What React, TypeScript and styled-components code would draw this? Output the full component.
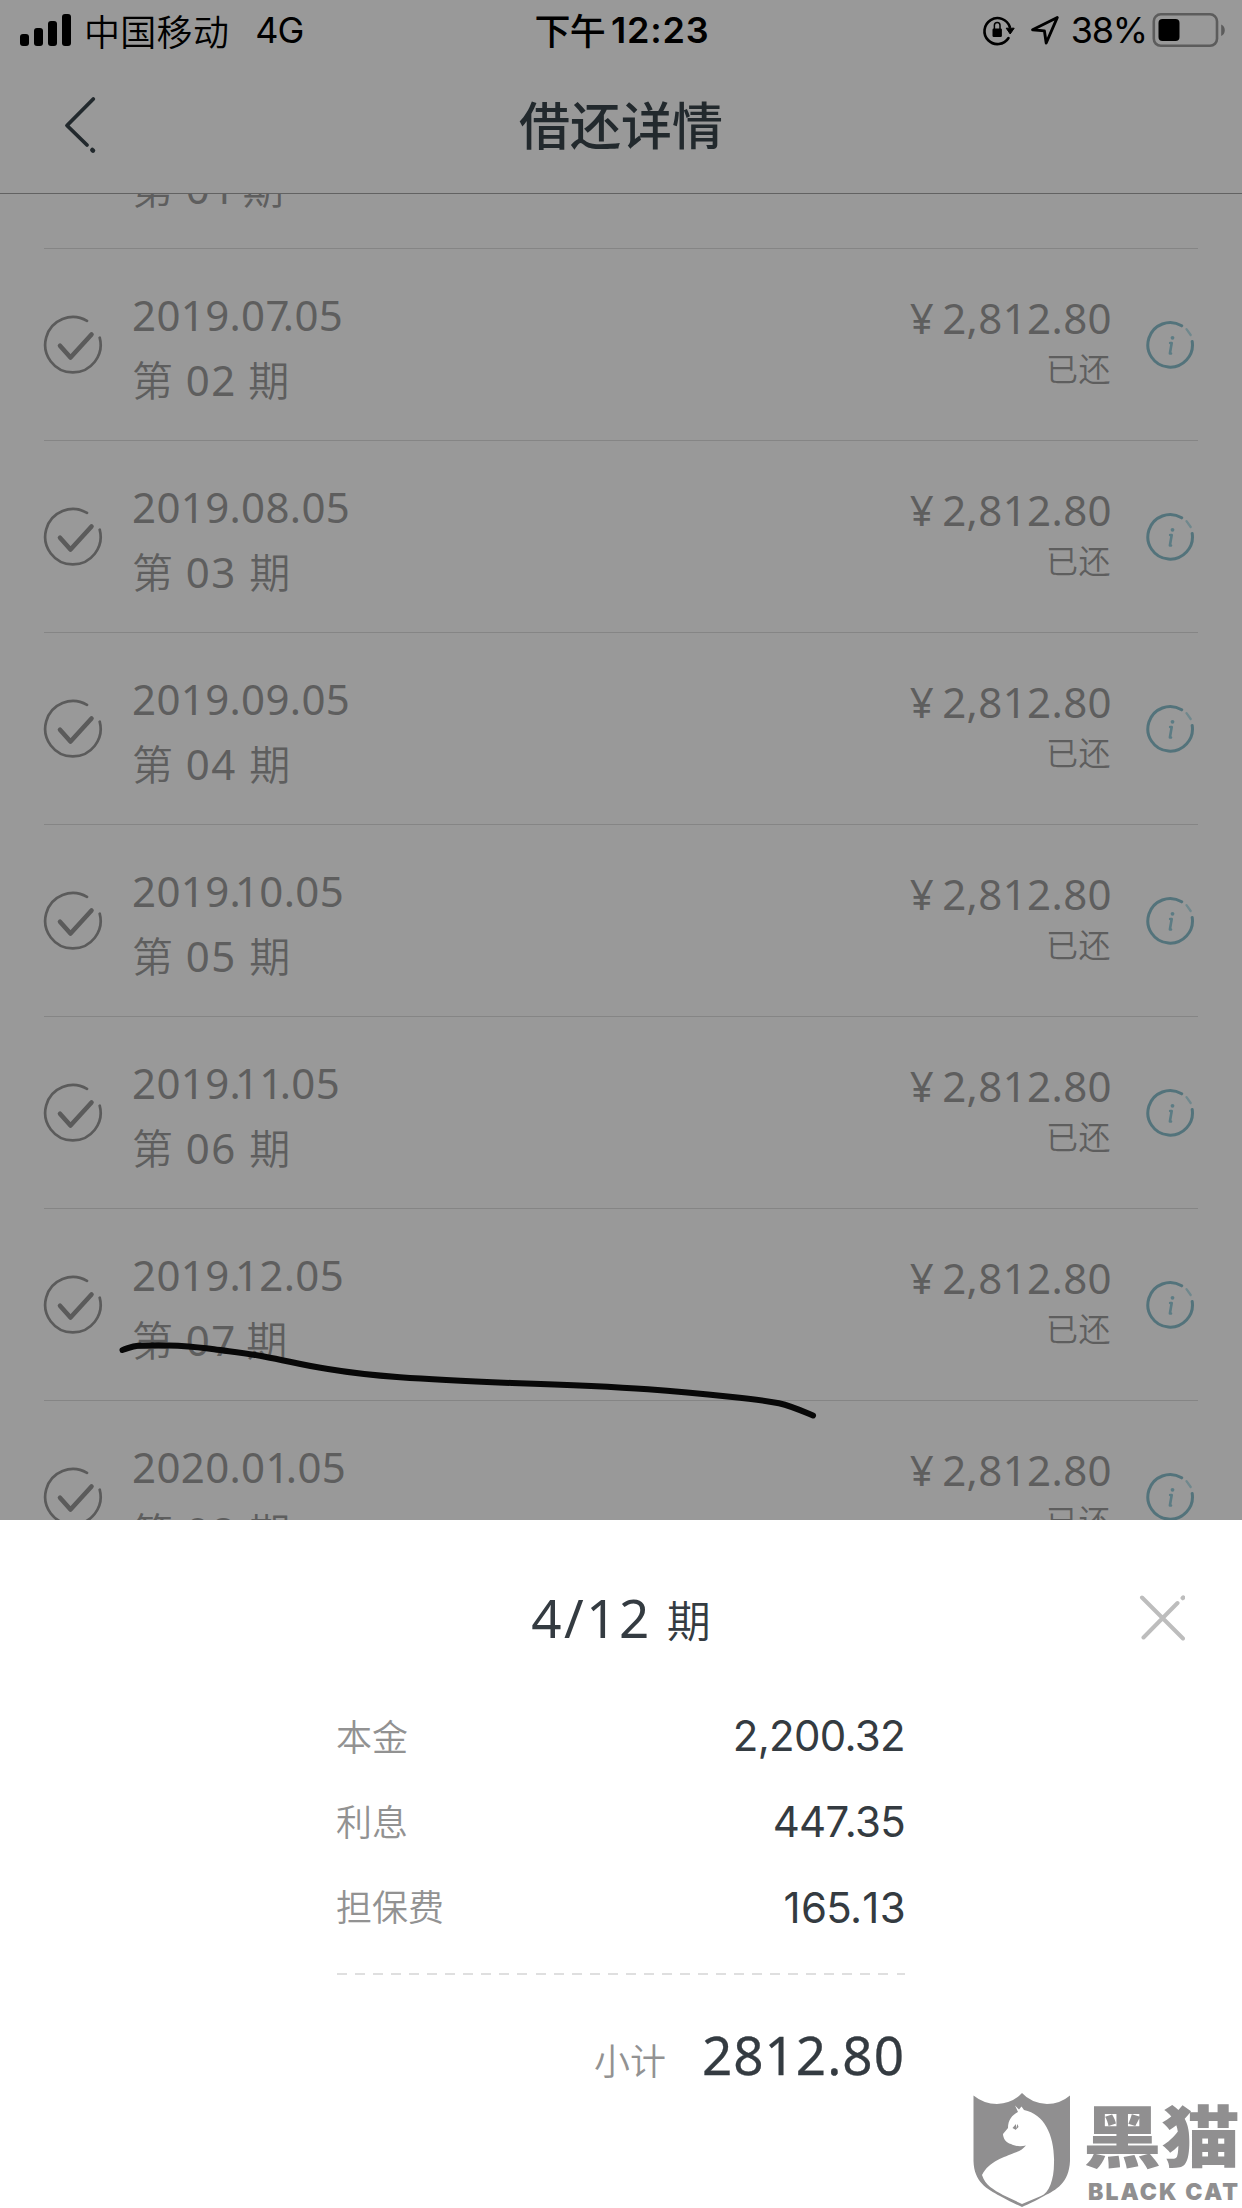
import React from "react";
import styled, { createGlobalStyle } from "styled-components";

const latin = `"Noto Sans", "Noto Sans CJK SC", sans-serif`;
const cjk = `"Noto Sans CJK SC", sans-serif`;
const system = `Inter, "Noto Sans CJK SC", sans-serif`;

const GlobalStyle = createGlobalStyle`
  body { margin: 0; background: #999; }
  * { box-sizing: border-box; }
`;

const Screen = styled.div`
  position: relative;
  width: 1242px;
  height: 2208px;
  overflow: hidden;
  display: flex;
  flex-direction: column;
  background: #999999;
`;

const StatusBar = styled.div`
  height: 60px;
  flex: none;
  display: grid;
  grid-template-columns: 1fr auto 1fr;
  align-items: center;
  padding: 0 15px 0 20px;
  color: #000;
  font: 400 36px/60px ${system};
`;

const StatusGroup = styled.div<{ $end?: boolean }>`
  display: flex;
  align-items: center;
  justify-content: ${(p) => (p.$end ? "flex-end" : "flex-start")};
  height: 60px;
`;

const Carrier = styled.span`
  margin-left: 12px;
  letter-spacing: 0.3px;
  font: 350 36px/60px ${cjk};
  height: 60px;
`;

const Network = styled.span`
  margin-left: 26px;
  letter-spacing: -0.9px;
`;

const Clock = styled.div`
  display: flex;
  font-weight: 600;
  letter-spacing: 0.8px;
  gap: 6px;
  margin-right: 3px;
`;

const ClockPrefix = styled.span`
  font: 500 36px/58px ${cjk};
  letter-spacing: -0.8px;
  height: 60px;
`;

const Percent = styled.span`
  letter-spacing: -1.2px;
  margin: 0 5px 0 11px;
`;

const NavBar = styled.div`
  height: 134px;
  flex: none;
  display: grid;
  grid-template-columns: 160px 1fr 160px;
  align-items: center;
  padding-bottom: 3px;
  border-bottom: 1px solid #626262;
`;

const BackIcon = styled.svg`
  width: 40px;
  height: 64px;
  margin-left: 60px;
`;

const NavTitle = styled.h1`
  margin: 0 0 5px;
  text-align: center;
  font: 500 51px/76px ${cjk};
  color: #22292d;
`;

const Viewport = styled.div`
  height: 1326px;
  flex: none;
  overflow: hidden;
`;

const List = styled.div`
  margin-top: -137px;
  padding: 0 44px;
`;

const Row = styled.div`
  height: 192px;
  display: flex;
  align-items: flex-start;
  border-bottom: 1px solid #858585;
  color: #5e5e5e;
`;

const CheckIcon = styled.svg`
  width: 60px;
  height: 60px;
  margin: 66px 0 0 -1px;
`;

const Period = styled.div`
  flex: 1;
  margin: 36px 0 0 29px;
  display: flex;
  flex-direction: column;
  gap: 5px;
  font: 400 42px/60px ${latin};
  letter-spacing: 0.35px;
`;

const Term = styled.span`
  display: flex;
  gap: 12.5px;
`;

const TermUnit = styled.span`
  font: 350 41px/56px ${cjk};
  height: 60px;
`;

const TermNumber = styled.span`
  letter-spacing: 1.4px;
`;

const Glyph = styled.span<{ $kern: number }>`
  margin-right: ${(p) => p.$kern}px;
`;

const Amount = styled.div`
  margin-top: 39px;
  display: flex;
  flex-direction: column;
  align-items: flex-end;
`;

const Money = styled.div`
  display: flex;
  gap: 8px;
  margin-right: -1px;
  font: 400 42px/60px ${latin};
  letter-spacing: 0.4px;
`;

const Paid = styled.div`
  font: 350 32px/38px ${cjk};
  letter-spacing: 0.5px;
  color: #5e5e5e;
`;

const InfoIcon = styled.svg`
  width: 50px;
  height: 50px;
  margin: 71px 3px 0 34px;
`;

const Ink = styled.svg`
  position: absolute;
  left: 110px;
  top: 1330px;
  width: 720px;
  height: 100px;
`;

const Sheet = styled.section`
  flex: 1;
  background: #fff;
  display: flex;
  flex-direction: column;
  color: #343b41;
`;

const SheetHeader = styled.div`
  height: 196px;
  display: grid;
  grid-template-columns: 120px 1fr 120px;
  align-items: center;
`;

const SheetTitle = styled.h2`
  grid-column: 2;
  margin: 0;
  display: flex;
  justify-content: center;
  align-items: baseline;
  gap: 15px;
  font: 400 53px/72px ${latin};
  letter-spacing: 2.4px;
`;

const TitleUnit = styled.span`
  font: 350 44px/72px ${cjk};
  letter-spacing: 0;
`;

const CloseIcon = styled.svg`
  width: 48px;
  height: 48px;
  margin-left: 15px;
`;

const Breakdown = styled.div`
  width: 568px;
  margin: -23px auto 0;
  display: flex;
  flex-direction: column;
`;

const Charges = styled.div`
  height: 258px;
  display: flex;
  justify-content: space-between;
`;

const ChargeColumn = styled.div<{ $pitch: number; $end?: boolean }>`
  display: grid;
  grid-auto-rows: ${(p) => p.$pitch}px;
  align-content: start;
  align-items: center;
  justify-items: ${(p) => (p.$end ? "end" : "start")};
`;

const Label = styled.span`
  margin: 0 0 0 -1px;
  font: 350 36px/60px ${cjk};
  color: #929292;
`;

const Value = styled.span`
  font: 400 42px/60px ${system};
  letter-spacing: -0.7px;
`;

const Dashes = styled.div`
  height: 2px;
  margin-top: 22px;
  background: repeating-linear-gradient(90deg, #dfdfdf 0 10px, transparent 10px 18.05px);
`;

const Subtotal = styled.div`
  margin-top: 44px;
  display: flex;
  justify-content: flex-end;
  align-items: baseline;
  gap: 36px;
`;

const Total = styled.span`
  font: 400 53px/72px ${latin};
  letter-spacing: 1px;
  -webkit-text-stroke: 0.3px #343b41;
`;

const Watermark = styled.div`
  position: absolute;
  left: 972px;
  top: 2092px;
  display: flex;
  gap: 17px;
  color: #908f90;
`;

const Shield = styled.svg`
  width: 99px;
  height: 116px;
`;

const Brand = styled.div`
  display: flex;
  flex-direction: column;
`;

const BrandName = styled.div`
  height: 80px;
  margin: 7px 0 0 -5px;
  font: 900 76px/76px ${cjk};
  white-space: nowrap;
  transform: scale(1.034, 0.89);
  transform-origin: 0 0;
`;

const BrandLatin = styled.div`
  font: 900 23px/26px Inter, sans-serif;
  letter-spacing: 2.1px;
  white-space: nowrap;
`;

const installments = [
  { date: "2019.06.05", term: "01" },
  { date: "2019.07.05", term: "02" },
  { date: "2019.08.05", term: "03" },
  { date: "2019.09.05", term: "04" },
  { date: "2019.10.05", term: "05" },
  { date: "2019.11.05", term: "06" },
  { date: "2019.12.05", term: "07" },
  { date: "2020.01.05", term: "08" },
];

const charges = [
  { label: "本金", value: "2,200.32" },
  { label: "利息", value: "447.35" },
  { label: "担保费", value: "165.13" },
];

type Pairs = Record<string, number>;

const listPairs: Pairs = {
  "7.": -7,
  ".1": -6.2,
  "1.": -4,
  "1 ": -6.5,
  "7 ": -3,
  "2 ": -1,
};

const valuePairs: Pairs = {
  "7.": -4,
  "16": 1,
  ".1": 1,
  "13": 1,
};

const Kerned = ({ text, pairs }: { text: string; pairs: Pairs }) => (
  <span>
    {text.trimEnd().split("").map((ch, i) => {
      const kern = pairs[text.slice(i, i + 2)];
      return kern ? (
        <Glyph key={i} $kern={kern}>
          {ch}
        </Glyph>
      ) : (
        ch
      );
    })}
  </span>
);

const Signal = () => (
  <svg width="52" height="34" viewBox="0 0 52 34">
    <rect x="0" y="21" width="9" height="12" rx="3" />
    <rect x="14" y="15" width="9" height="18" rx="3" />
    <rect x="28" y="8" width="9" height="25" rx="3" />
    <rect x="42" y="1" width="9" height="32" rx="3" />
  </svg>
);

const RotationLock = () => (
  <svg width="34" height="34" viewBox="0 0 34 34" fill="none">
    <path d="M26.500 25A13 13 0 1 1 27.800 14" stroke="#000" strokeWidth="2.600" strokeLinecap="round" />
    <path d="M24.200 15.200H32.200L28.200 21Z" fill="#000" stroke="#000" strokeLinejoin="round" />
    <rect x="10.500" y="15.500" width="9.400" height="8.500" rx="1.200" fill="#000" />
    <path d="M12.400 16V12.200a2.800 2.800 0 0 1 5.600 0V16" stroke="#000" strokeWidth="1.500" />
  </svg>
);

const LocationArrow = () => (
  <svg width="30" height="32" viewBox="0 0 30 32" fill="none">
    <path d="M27.300 3.500L2.600 15.800L14.400 16.900L16.200 29Z" stroke="#000" strokeWidth="2.900" strokeLinejoin="round" />
  </svg>
);

const Battery = () => (
  <svg width="75" height="36" viewBox="0 0 75 36" fill="none">
    <rect x="1.800" y="2.300" width="63.200" height="31.500" rx="7" stroke="#5c5c5c" strokeWidth="2.600" />
    <rect x="6.500" y="7" width="21" height="22" rx="4" fill="#000" />
    <path d="M69.200 12.500C74 14.500 74 22 69.200 24Z" fill="#5c5c5c" />
  </svg>
);

const IconGroup = styled.div`
  display: flex;
  align-items: center;
  gap: 14px;
`;

const CatShield = () => (
  <Shield viewBox="0 0 99 116">
    <path
      fill="#908f90"
      d="M1.500 3.500Q12 12 25 12Q41 11 50 1Q59 11 75 12Q88 12 98 3.500V69C97 91 84 98 72 104C63 109 57 112 50 115C43 112 37 109 28 104C15 97 2 90 1.500 69Z"
    />
    <path
      fill="#fff"
      d="M43 13.500L47 17.500L49.500 14.500L52 18C73 22 83 45 82 71C82 88 77 101 69 104L50 112L31 103C22 98 13 93 10 83C17 69 33 65 42 61C48 59 51 57 54 53.500C48 55 42 54 39 52C34 51 31 46 31 42L36 36C36 28 40 23 46 20Z"
    />
    <path fill="#908f90" d="M40.500 36L44 32V38ZM45.500 32L46.500 35L43.500 38Z" />
  </Shield>
);

const Installment = ({ date, term }: { date: string; term: string }) => (
  <Row>
    <CheckIcon viewBox="0 0 60 60" fill="none" stroke="#5b5b5b" strokeLinecap="round">
      <path d="M44 5.900A27.700 27.700 0 1 0 56.700 22.700" strokeWidth="2.700" />
      <path d="M17 30.700L27.500 42.500L48.500 19.500" strokeWidth="4.600" strokeLinejoin="round" />
    </CheckIcon>
    <Period>
      <Kerned text={date} pairs={listPairs} />
      <Term>
        <TermUnit>第</TermUnit>
        <TermNumber>
          <Kerned text={`${term} `} pairs={listPairs} />
        </TermNumber>
        <TermUnit>期</TermUnit>
      </Term>
    </Period>
    <Amount>
      <Money>
        <span>¥</span>
        <span>2,812.80</span>
      </Money>
      <Paid>已还</Paid>
    </Amount>
    <InfoIcon viewBox="0 0 50 50" fill="none" stroke="#53737b" strokeLinecap="round">
      <path d="M36.700 5.800A22.300 22.300 0 1 0 47.200 21.500" strokeWidth="3" />
      <path d="M41.500 9.200L45.700 15" stroke="#70888d" strokeWidth="2.300" />
      <circle cx="27.500" cy="17.800" r="1.900" fill="#5c7c84" stroke="none" />
      <path d="M25.200 23H26.700L24.900 33.500H26" stroke="#5c7c84" strokeWidth="2.600" strokeLinejoin="round" />
    </InfoIcon>
  </Row>
);

export default function App() {
  return (
    <Screen>
      <GlobalStyle />
      <StatusBar>
        <StatusGroup>
          <Signal />
          <Carrier>中国移动</Carrier>
          <Network>4G</Network>
        </StatusGroup>
        <Clock>
          <ClockPrefix>下午</ClockPrefix>
          <span>12:23</span>
        </Clock>
        <StatusGroup $end>
          <IconGroup>
            <RotationLock />
            <LocationArrow />
          </IconGroup>
          <Percent>38%</Percent>
          <Battery />
        </StatusGroup>
      </StatusBar>
      <NavBar>
        <BackIcon viewBox="0 0 40 64" fill="none" stroke="#22292d" strokeWidth="3.800" strokeLinecap="round" strokeLinejoin="round">
          <path d="M33.300 6L7 32.500L27 52" />
          <path d="M32.300 57L33 57.700" strokeWidth="4.500" />
        </BackIcon>
        <NavTitle>借还详情</NavTitle>
      </NavBar>
      <Viewport>
        <List>
          {installments.map((item) => (
            <Installment key={item.term} {...item} />
          ))}
        </List>
      </Viewport>
      <Sheet>
        <SheetHeader>
          <SheetTitle>
            <span>4/12</span>
            <TitleUnit>期</TitleUnit>
          </SheetTitle>
          <CloseIcon viewBox="0 0 48 48" fill="none" stroke="#bdbdbd" strokeWidth="4" strokeLinecap="round">
            <path d="M5 3.500L46 44.500M6.500 43.500L40.500 9" />
            <path d="M45.800 4L46.200 3.600" strokeWidth="4.500" />
          </CloseIcon>
        </SheetHeader>
        <Breakdown>
          <Charges>
            <ChargeColumn $pitch={84.8}>
              {charges.map((c) => (
                <Label key={c.label}>{c.label}</Label>
              ))}
            </ChargeColumn>
            <ChargeColumn $pitch={86} $end>
              {charges.map((c) => (
                <Value key={c.label}>
                  <Kerned text={c.value} pairs={valuePairs} />
                </Value>
              ))}
            </ChargeColumn>
          </Charges>
          <Dashes />
          <Subtotal>
            <Label>小计</Label>
            <Total>2812.80</Total>
          </Subtotal>
        </Breakdown>
      </Sheet>
      <Ink viewBox="110 1330 720 100" fill="none" stroke="#080808" strokeWidth="6" strokeLinecap="round" strokeLinejoin="round">
        <path d="M122.500 1350C129 1348 132 1346 138 1345.700C152 1345 165 1345 178 1345.700C190 1346.500 202 1347.500 214 1349.300C232 1351.800 248 1353.500 265 1356.700C288 1361 306 1366 328 1369C352 1373 376 1375.500 400 1377.300C438 1380 475 1381.500 512 1383C558 1384.500 603 1386 648 1389.300C676 1391.500 703 1394 730 1396.700C748 1398.500 763 1400 779 1403.300C791 1406 801 1410.500 813 1415.500" />
      </Ink>
      <Watermark>
        <CatShield />
        <Brand>
          <BrandName>黑猫</BrandName>
          <BrandLatin>BLACK CAT</BrandLatin>
        </Brand>
      </Watermark>
    </Screen>
  );
}
